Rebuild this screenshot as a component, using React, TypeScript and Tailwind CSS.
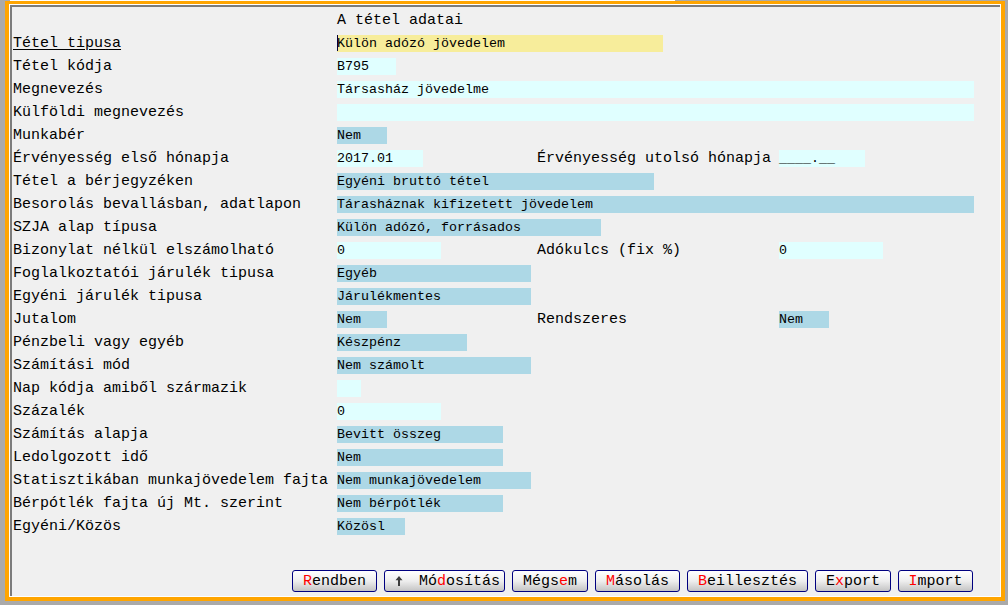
import React from "react";

type Field = {
  text: string;
  w: string;
  bg: "cyan" | "blue" | "yellow";
};

type Row = {
  label: string;
  field: Field;
  underline?: boolean;
  right?: { label: string; field: Field };
};

const bgClass = {
  cyan: "bg-[#e0ffff]",
  blue: "bg-[#add8e6]",
  yellow: "bg-[#f7ed9b]",
};

const rows: Row[] = [
  { label: "Tétel tipusa", underline: true, field: { text: "Külön adózó jövedelem", w: "w-[326px]", bg: "yellow" } },
  { label: "Tétel kódja", field: { text: "B795", w: "w-[59px]", bg: "cyan" } },
  { label: "Megnevezés", field: { text: "Társasház jövedelme", w: "w-[637px]", bg: "cyan" } },
  { label: "Külföldi megnevezés", field: { text: "", w: "w-[637px]", bg: "cyan" } },
  { label: "Munkabér", field: { text: "Nem", w: "w-[50px]", bg: "blue" } },
  {
    label: "Érvényesség első hónapja",
    field: { text: "2017.01", w: "w-[86px]", bg: "cyan" },
    right: { label: "Érvényesség utolsó hónapja", field: { text: "____.__", w: "w-[86px]", bg: "cyan" } },
  },
  { label: "Tétel a bérjegyzéken", field: { text: "Egyéni bruttó tétel", w: "w-[317px]", bg: "blue" } },
  { label: "Besorolás bevallásban, adatlapon", field: { text: "Tárasháznak kifizetett jövedelem", w: "w-[637px]", bg: "blue" } },
  { label: "SZJA alap típusa", field: { text: "Külön adózó, forrásados", w: "w-[264px]", bg: "blue" } },
  {
    label: "Bizonylat nélkül elszámolható",
    field: { text: "0", w: "w-[104px]", bg: "cyan" },
    right: { label: "Adókulcs (fix %)", field: { text: "0", w: "w-[104px]", bg: "cyan" } },
  },
  { label: "Foglalkoztatói járulék tipusa", field: { text: "Egyéb", w: "w-[194px]", bg: "blue" } },
  { label: "Egyéni járulék tipusa", field: { text: "Járulékmentes", w: "w-[194px]", bg: "blue" } },
  {
    label: "Jutalom",
    field: { text: "Nem", w: "w-[50px]", bg: "blue" },
    right: { label: "Rendszeres", field: { text: "Nem", w: "w-[50px]", bg: "blue" } },
  },
  { label: "Pénzbeli vagy egyéb", field: { text: "Készpénz", w: "w-[130px]", bg: "blue" } },
  { label: "Számítási mód", field: { text: "Nem számolt", w: "w-[194px]", bg: "blue" } },
  { label: "Nap kódja amiből származik", field: { text: "", w: "w-[24px]", bg: "cyan" } },
  { label: "Százalék", field: { text: "0", w: "w-[104px]", bg: "cyan" } },
  { label: "Számítás alapja", field: { text: "Bevitt összeg", w: "w-[166px]", bg: "blue" } },
  { label: "Ledolgozott idő", field: { text: "Nem", w: "w-[166px]", bg: "blue" } },
  { label: "Statisztikában munkajövedelem fajta", field: { text: "Nem munkajövedelem", w: "w-[194px]", bg: "blue" } },
  { label: "Bérpótlék fajta új Mt. szerint", field: { text: "Nem bérpótlék", w: "w-[166px]", bg: "blue" } },
  { label: "Egyéni/Közös", field: { text: "Közösl", w: "w-[68px]", bg: "blue" } },
];

const Input: React.FC<{ f: Field; caret?: boolean }> = ({ f, caret }) => (
  <div
    className={`relative h-[17px] shrink-0 ${f.w} ${bgClass[f.bg]} text-[13.33px] leading-[17px] text-black whitespace-pre`}
  >
    {caret && <span className="absolute left-0 top-0 h-[16px] w-px bg-[#000040]" />}
    {f.text}
  </div>
);

const Btn: React.FC<{ w: string; pre: string; hot: string; post: string; arrow?: boolean }> = ({
  w,
  pre,
  hot,
  post,
  arrow,
}) => (
  <button
    className={`${w} h-[22px] shrink-0 flex items-center ${arrow ? "justify-start pl-[10px]" : "justify-center"} border border-[#000080] rounded-[3px] bg-linear-to-b from-white via-[#eeeeee] to-[#c4c4c4] text-[15px] leading-[17px] text-black`}
  >
    {arrow && (
      <svg width="8" height="10" viewBox="0 0 8 10" className="mr-[16px]">
        <path d="M4 0 L7.5 4.2 L5 4.2 L5 10 L3 10 L3 4.2 L0.5 4.2 Z" fill="#3c3c3c" />
      </svg>
    )}
    <span className="whitespace-pre">
      {pre}
      <span className="text-[#ff0000]">{hot}</span>
      {post}
    </span>
  </button>
);

export default function App() {
  return (
    <div className="w-[1008px] h-[605px] bg-[#aaaaaa] overflow-hidden font-['Liberation_Mono','Courier_New',monospace]">
      <div className="h-px ml-[10px] w-[665px] bg-white" />
      <div className="ml-[5px] w-[1000px] h-[600px] border-x-4 border-b-4 border-t-[3px] border-[#ffa500] bg-white p-px">
        <div className="h-full border-t-2 border-l-2 border-t-[#7c7c7c] border-l-[#7c7c7c] bg-[#f0f0f0] pl-px pt-px flex flex-col">
          <div className="h-[24px] flex items-center">
            <div className="w-[324px] shrink-0" />
            <span className="text-[15px] leading-[17px] text-black">A tétel adatai</span>
          </div>
          {rows.map((r, i) => (
            <div key={i} className="h-[23px] flex items-center text-[15px] leading-[17px] text-black">
              <div className={`w-[324px] shrink-0 whitespace-pre ${r.underline ? "underline underline-offset-2" : ""}`}>
                {r.label}
              </div>
              {r.right ? (
                <>
                  <div className="w-[200px] shrink-0 flex">
                    <Input f={r.field} />
                  </div>
                  <div className="w-[242px] shrink-0 whitespace-pre">{r.right.label}</div>
                  <Input f={r.right.field} />
                </>
              ) : (
                <Input f={r.field} caret={i === 0} />
              )}
            </div>
          ))}
          <div className="mt-[32px] ml-[279px] flex gap-[7px]">
            <Btn w="w-[85px]" pre="" hot="R" post="endben" />
            <Btn w="w-[121px]" pre="Mó" hot="d" post="osítás" arrow />
            <Btn w="w-[76px]" pre="Mégs" hot="e" post="m" />
            <Btn w="w-[85px]" pre="" hot="M" post="ásolás" />
            <Btn w="w-[121px]" pre="" hot="B" post="eillesztés" />
            <Btn w="w-[76px]" pre="E" hot="x" post="port" />
            <Btn w="w-[75px]" pre="" hot="I" post="mport" />
          </div>
        </div>
      </div>
    </div>
  );
}
